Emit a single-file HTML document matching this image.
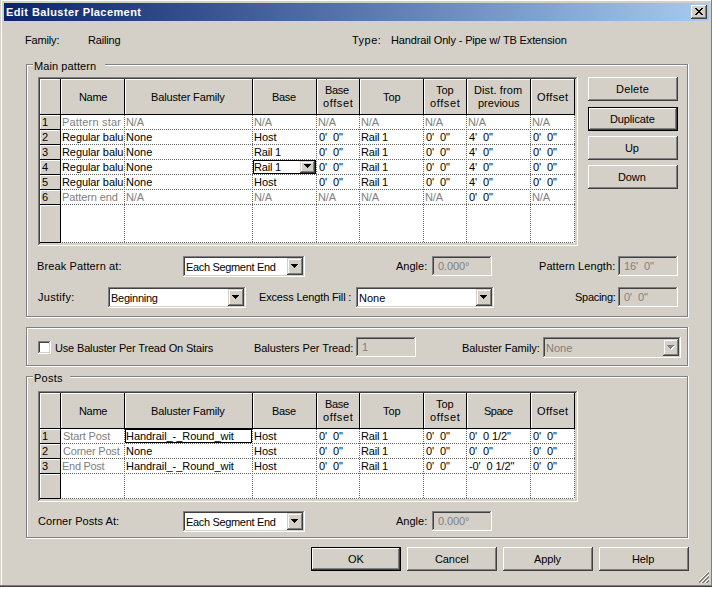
<!DOCTYPE html>
<html><head><meta charset="utf-8"><style>
*{margin:0;padding:0}
html,body{width:712px;height:589px;overflow:hidden;background:#fff}
body{position:relative;font-family:"Liberation Sans",sans-serif;font-size:11px;line-height:13px;letter-spacing:-0.25px;color:#000}
div{position:absolute}
.t{white-space:pre}
</style></head><body>
<div style="left:0px;top:0px;width:712px;height:587px;background:#404040"></div>
<div style="left:0px;top:0px;width:712px;height:586px;background:#808080"></div>
<div style="left:0px;top:0px;width:711px;height:585px;background:#d4d0c8"></div>
<div style="left:1px;top:0px;width:710px;height:585px;background:#ffffff"></div>
<div style="left:2px;top:1px;width:709px;height:584px;background:#d4d0c8"></div>
<div style="left:4px;top:3px;width:705px;height:18px;background:linear-gradient(90deg,#0a246a,#a6caf0)"></div>
<div class="t" style="left:6px;top:6px;color:#fff;letter-spacing:0.409px;font-weight:bold;">Edit Baluster Placement</div>
<div style="left:691px;top:5px;width:16px;height:14px;background:#404040"></div>
<div style="left:691px;top:5px;width:15px;height:13px;background:#ffffff"></div>
<div style="left:692px;top:6px;width:14px;height:12px;background:#808080"></div>
<div style="left:692px;top:6px;width:13px;height:11px;background:#d4d0c8"></div>
<div style="left:695px;top:8px;width:1px;height:1px;background:#000000"></div>
<div style="left:696px;top:8px;width:1px;height:1px;background:#000000"></div>
<div style="left:701px;top:8px;width:1px;height:1px;background:#000000"></div>
<div style="left:702px;top:8px;width:1px;height:1px;background:#000000"></div>
<div style="left:696px;top:9px;width:1px;height:1px;background:#000000"></div>
<div style="left:697px;top:9px;width:1px;height:1px;background:#000000"></div>
<div style="left:700px;top:9px;width:1px;height:1px;background:#000000"></div>
<div style="left:701px;top:9px;width:1px;height:1px;background:#000000"></div>
<div style="left:697px;top:10px;width:1px;height:1px;background:#000000"></div>
<div style="left:698px;top:10px;width:1px;height:1px;background:#000000"></div>
<div style="left:699px;top:10px;width:1px;height:1px;background:#000000"></div>
<div style="left:700px;top:10px;width:1px;height:1px;background:#000000"></div>
<div style="left:698px;top:11px;width:1px;height:1px;background:#000000"></div>
<div style="left:699px;top:11px;width:1px;height:1px;background:#000000"></div>
<div style="left:697px;top:12px;width:1px;height:1px;background:#000000"></div>
<div style="left:698px;top:12px;width:1px;height:1px;background:#000000"></div>
<div style="left:699px;top:12px;width:1px;height:1px;background:#000000"></div>
<div style="left:700px;top:12px;width:1px;height:1px;background:#000000"></div>
<div style="left:696px;top:13px;width:1px;height:1px;background:#000000"></div>
<div style="left:697px;top:13px;width:1px;height:1px;background:#000000"></div>
<div style="left:700px;top:13px;width:1px;height:1px;background:#000000"></div>
<div style="left:701px;top:13px;width:1px;height:1px;background:#000000"></div>
<div style="left:695px;top:14px;width:1px;height:1px;background:#000000"></div>
<div style="left:696px;top:14px;width:1px;height:1px;background:#000000"></div>
<div style="left:701px;top:14px;width:1px;height:1px;background:#000000"></div>
<div style="left:702px;top:14px;width:1px;height:1px;background:#000000"></div>
<div class="t" style="left:25px;top:34px;color:#000;letter-spacing:-0.167px;">Family:</div>
<div class="t" style="left:88px;top:34px;color:#000;letter-spacing:-0.167px;">Railing</div>
<div class="t" style="left:352px;top:34px;color:#000;letter-spacing:0.500px;">Type:</div>
<div class="t" style="left:391px;top:34px;color:#000;letter-spacing:-0.143px;">Handrail Only - Pipe w/ TB Extension</div>
<div style="left:26px;top:64px;width:662px;height:1px;background:#808080"></div>
<div style="left:26px;top:64px;width:1px;height:253px;background:#808080"></div>
<div style="left:688px;top:64px;width:1px;height:254px;background:#ffffff"></div>
<div style="left:26px;top:317px;width:663px;height:1px;background:#ffffff"></div>
<div style="left:27px;top:65px;width:660px;height:1px;background:#ffffff"></div>
<div style="left:27px;top:65px;width:1px;height:251px;background:#ffffff"></div>
<div style="left:687px;top:65px;width:1px;height:252px;background:#808080"></div>
<div style="left:27px;top:316px;width:661px;height:1px;background:#808080"></div>
<div style="left:33px;top:64px;width:72px;height:2px;background:#d4d0c8"></div>
<div class="t" style="left:34px;top:60px;color:#000;letter-spacing:0.091px;">Main pattern</div>
<div style="left:38px;top:77px;width:540px;height:169px;background:#ffffff"></div>
<div style="left:38px;top:77px;width:539px;height:168px;background:#808080"></div>
<div style="left:39px;top:78px;width:538px;height:167px;background:#d4d0c8"></div>
<div style="left:39px;top:78px;width:537px;height:166px;background:#404040"></div>
<div style="left:40px;top:79px;width:536px;height:165px;background:#d4d0c8"></div>
<div style="left:40px;top:79px;width:21px;height:36px;background:#000000"></div>
<div style="left:40px;top:79px;width:20px;height:35px;background:#ffffff"></div>
<div style="left:41px;top:80px;width:19px;height:34px;background:#d4d0c8"></div>
<div style="left:61px;top:79px;width:64px;height:36px;background:#000000"></div>
<div style="left:61px;top:79px;width:63px;height:35px;background:#ffffff"></div>
<div style="left:62px;top:80px;width:62px;height:34px;background:#d4d0c8"></div>
<div style="left:125px;top:79px;width:128px;height:36px;background:#000000"></div>
<div style="left:125px;top:79px;width:127px;height:35px;background:#ffffff"></div>
<div style="left:126px;top:80px;width:126px;height:34px;background:#d4d0c8"></div>
<div style="left:253px;top:79px;width:64px;height:36px;background:#000000"></div>
<div style="left:253px;top:79px;width:63px;height:35px;background:#ffffff"></div>
<div style="left:254px;top:80px;width:62px;height:34px;background:#d4d0c8"></div>
<div style="left:317px;top:79px;width:43px;height:36px;background:#000000"></div>
<div style="left:317px;top:79px;width:42px;height:35px;background:#ffffff"></div>
<div style="left:318px;top:80px;width:41px;height:34px;background:#d4d0c8"></div>
<div style="left:360px;top:79px;width:64px;height:36px;background:#000000"></div>
<div style="left:360px;top:79px;width:63px;height:35px;background:#ffffff"></div>
<div style="left:361px;top:80px;width:62px;height:34px;background:#d4d0c8"></div>
<div style="left:424px;top:79px;width:43px;height:36px;background:#000000"></div>
<div style="left:424px;top:79px;width:42px;height:35px;background:#ffffff"></div>
<div style="left:425px;top:80px;width:41px;height:34px;background:#d4d0c8"></div>
<div style="left:467px;top:79px;width:64px;height:36px;background:#000000"></div>
<div style="left:467px;top:79px;width:63px;height:35px;background:#ffffff"></div>
<div style="left:468px;top:80px;width:62px;height:34px;background:#d4d0c8"></div>
<div style="left:531px;top:79px;width:44px;height:36px;background:#000000"></div>
<div style="left:531px;top:79px;width:43px;height:35px;background:#ffffff"></div>
<div style="left:532px;top:80px;width:42px;height:34px;background:#d4d0c8"></div>
<div class="t" style="left:79px;top:91px;color:#000;letter-spacing:-0.333px;">Name</div>
<div class="t" style="left:151px;top:91px;color:#000;letter-spacing:-0.143px;">Baluster Family</div>
<div class="t" style="left:272px;top:91px;color:#000;letter-spacing:-0.333px;">Base</div>
<div class="t" style="left:325px;top:84px;color:#000;letter-spacing:-0.333px;">Base</div>
<div class="t" style="left:323px;top:97px;color:#000;letter-spacing:0.600px;">offset</div>
<div class="t" style="left:383px;top:91px;color:#000;letter-spacing:0.000px;">Top</div>
<div class="t" style="left:436px;top:84px;color:#000;letter-spacing:0.000px;">Top</div>
<div class="t" style="left:430px;top:97px;color:#000;letter-spacing:0.600px;">offset</div>
<div class="t" style="left:474px;top:84px;color:#000;letter-spacing:0.111px;">Dist. from</div>
<div class="t" style="left:478px;top:97px;color:#000;letter-spacing:0.000px;">previous</div>
<div class="t" style="left:537px;top:91px;color:#000;letter-spacing:0.400px;">Offset</div>
<div style="left:61px;top:115px;width:514px;height:128px;background:#ffffff"></div>
<div style="left:40px;top:115px;width:21px;height:15px;background:#000000"></div>
<div style="left:40px;top:115px;width:20px;height:14px;background:#ffffff"></div>
<div style="left:41px;top:116px;width:19px;height:13px;background:#d4d0c8"></div>
<div class="t" style="left:42px;top:116px;color:#000;letter-spacing:-0.100px;">1</div>
<div style="left:61px;top:129px;width:514px;height:1px;background:repeating-linear-gradient(90deg,transparent 0 1px,#646464 1px 2px)"></div>
<div style="left:40px;top:130px;width:21px;height:15px;background:#000000"></div>
<div style="left:40px;top:130px;width:20px;height:14px;background:#ffffff"></div>
<div style="left:41px;top:131px;width:19px;height:13px;background:#d4d0c8"></div>
<div class="t" style="left:42px;top:131px;color:#000;letter-spacing:-0.100px;">2</div>
<div style="left:61px;top:144px;width:514px;height:1px;background:repeating-linear-gradient(90deg,transparent 0 1px,#646464 1px 2px)"></div>
<div style="left:40px;top:145px;width:21px;height:15px;background:#000000"></div>
<div style="left:40px;top:145px;width:20px;height:14px;background:#ffffff"></div>
<div style="left:41px;top:146px;width:19px;height:13px;background:#d4d0c8"></div>
<div class="t" style="left:42px;top:146px;color:#000;letter-spacing:-0.100px;">3</div>
<div style="left:61px;top:159px;width:514px;height:1px;background:repeating-linear-gradient(90deg,transparent 0 1px,#646464 1px 2px)"></div>
<div style="left:40px;top:160px;width:21px;height:15px;background:#000000"></div>
<div style="left:40px;top:160px;width:20px;height:14px;background:#ffffff"></div>
<div style="left:41px;top:161px;width:19px;height:13px;background:#d4d0c8"></div>
<div class="t" style="left:42px;top:161px;color:#000;letter-spacing:-0.100px;">4</div>
<div style="left:61px;top:174px;width:514px;height:1px;background:repeating-linear-gradient(90deg,transparent 0 1px,#646464 1px 2px)"></div>
<div style="left:40px;top:175px;width:21px;height:15px;background:#000000"></div>
<div style="left:40px;top:175px;width:20px;height:14px;background:#ffffff"></div>
<div style="left:41px;top:176px;width:19px;height:13px;background:#d4d0c8"></div>
<div class="t" style="left:42px;top:176px;color:#000;letter-spacing:-0.100px;">5</div>
<div style="left:61px;top:189px;width:514px;height:1px;background:repeating-linear-gradient(90deg,transparent 0 1px,#646464 1px 2px)"></div>
<div style="left:40px;top:190px;width:21px;height:15px;background:#000000"></div>
<div style="left:40px;top:190px;width:20px;height:14px;background:#ffffff"></div>
<div style="left:41px;top:191px;width:19px;height:13px;background:#d4d0c8"></div>
<div class="t" style="left:42px;top:191px;color:#000;letter-spacing:-0.100px;">6</div>
<div style="left:61px;top:204px;width:514px;height:1px;background:repeating-linear-gradient(90deg,transparent 0 1px,#646464 1px 2px)"></div>
<div style="left:40px;top:205px;width:21px;height:38px;background:#000000"></div>
<div style="left:40px;top:205px;width:20px;height:37px;background:#ffffff"></div>
<div style="left:41px;top:206px;width:19px;height:36px;background:#d4d0c8"></div>
<div style="left:61px;top:242px;width:513px;height:1px;background:repeating-linear-gradient(90deg,transparent 0 1px,#646464 1px 2px)"></div>
<div style="left:124px;top:115px;width:1px;height:128px;background:repeating-linear-gradient(180deg,#646464 0 1px,transparent 1px 2px)"></div>
<div style="left:252px;top:115px;width:1px;height:128px;background:repeating-linear-gradient(180deg,#646464 0 1px,transparent 1px 2px)"></div>
<div style="left:316px;top:115px;width:1px;height:128px;background:repeating-linear-gradient(180deg,#646464 0 1px,transparent 1px 2px)"></div>
<div style="left:359px;top:115px;width:1px;height:128px;background:repeating-linear-gradient(180deg,#646464 0 1px,transparent 1px 2px)"></div>
<div style="left:423px;top:115px;width:1px;height:128px;background:repeating-linear-gradient(180deg,#646464 0 1px,transparent 1px 2px)"></div>
<div style="left:466px;top:115px;width:1px;height:128px;background:repeating-linear-gradient(180deg,#646464 0 1px,transparent 1px 2px)"></div>
<div style="left:530px;top:115px;width:1px;height:128px;background:repeating-linear-gradient(180deg,#646464 0 1px,transparent 1px 2px)"></div>
<div style="left:574px;top:115px;width:1px;height:128px;background:repeating-linear-gradient(180deg,#646464 0 1px,transparent 1px 2px)"></div>
<div class="t" style="left:62px;top:116px;color:#808080;letter-spacing:0.182px;">Pattern star</div>
<div class="t" style="left:126px;top:116px;color:#808080;letter-spacing:-0.100px;">N/A</div>
<div class="t" style="left:254px;top:116px;color:#808080;letter-spacing:-0.100px;">N/A</div>
<div class="t" style="left:318px;top:116px;color:#808080;letter-spacing:-0.100px;">N/A</div>
<div class="t" style="left:361px;top:116px;color:#808080;letter-spacing:-0.100px;">N/A</div>
<div class="t" style="left:425px;top:116px;color:#808080;letter-spacing:-0.100px;">N/A</div>
<div class="t" style="left:468px;top:116px;color:#808080;letter-spacing:-0.100px;">N/A</div>
<div class="t" style="left:532px;top:116px;color:#808080;letter-spacing:-0.100px;">N/A</div>
<div class="t" style="left:62px;top:131px;color:#000;letter-spacing:-0.091px;">Regular balu</div>
<div class="t" style="left:126px;top:131px;color:#000;letter-spacing:0.000px;">None</div>
<div class="t" style="left:254px;top:131px;color:#000;letter-spacing:0.000px;">Host</div>
<div class="t" style="left:319px;top:131px;color:#000;letter-spacing:-0.100px;">0'  0"</div>
<div class="t" style="left:361px;top:131px;color:#000;letter-spacing:-0.200px;">Rail 1</div>
<div class="t" style="left:426px;top:131px;color:#000;letter-spacing:-0.100px;">0'  0"</div>
<div class="t" style="left:469px;top:131px;color:#000;letter-spacing:-0.100px;">4'  0"</div>
<div class="t" style="left:533px;top:131px;color:#000;letter-spacing:-0.100px;">0'  0"</div>
<div class="t" style="left:62px;top:146px;color:#000;letter-spacing:-0.091px;">Regular balu</div>
<div class="t" style="left:126px;top:146px;color:#000;letter-spacing:0.000px;">None</div>
<div class="t" style="left:254px;top:146px;color:#000;letter-spacing:-0.200px;">Rail 1</div>
<div class="t" style="left:319px;top:146px;color:#000;letter-spacing:-0.100px;">0'  0"</div>
<div class="t" style="left:361px;top:146px;color:#000;letter-spacing:-0.200px;">Rail 1</div>
<div class="t" style="left:426px;top:146px;color:#000;letter-spacing:-0.100px;">0'  0"</div>
<div class="t" style="left:469px;top:146px;color:#000;letter-spacing:-0.100px;">4'  0"</div>
<div class="t" style="left:533px;top:146px;color:#000;letter-spacing:-0.100px;">0'  0"</div>
<div class="t" style="left:62px;top:161px;color:#000;letter-spacing:-0.091px;">Regular balu</div>
<div class="t" style="left:126px;top:161px;color:#000;letter-spacing:0.000px;">None</div>
<div class="t" style="left:319px;top:161px;color:#000;letter-spacing:-0.100px;">0'  0"</div>
<div class="t" style="left:361px;top:161px;color:#000;letter-spacing:-0.200px;">Rail 1</div>
<div class="t" style="left:426px;top:161px;color:#000;letter-spacing:-0.100px;">0'  0"</div>
<div class="t" style="left:469px;top:161px;color:#000;letter-spacing:-0.100px;">4'  0"</div>
<div class="t" style="left:533px;top:161px;color:#000;letter-spacing:-0.100px;">0'  0"</div>
<div class="t" style="left:62px;top:176px;color:#000;letter-spacing:-0.091px;">Regular balu</div>
<div class="t" style="left:126px;top:176px;color:#000;letter-spacing:0.000px;">None</div>
<div class="t" style="left:254px;top:176px;color:#000;letter-spacing:0.000px;">Host</div>
<div class="t" style="left:319px;top:176px;color:#000;letter-spacing:-0.100px;">0'  0"</div>
<div class="t" style="left:361px;top:176px;color:#000;letter-spacing:-0.200px;">Rail 1</div>
<div class="t" style="left:426px;top:176px;color:#000;letter-spacing:-0.100px;">0'  0"</div>
<div class="t" style="left:469px;top:176px;color:#000;letter-spacing:-0.100px;">4'  0"</div>
<div class="t" style="left:533px;top:176px;color:#000;letter-spacing:-0.100px;">0'  0"</div>
<div class="t" style="left:62px;top:191px;color:#808080;letter-spacing:-0.100px;">Pattern end</div>
<div class="t" style="left:126px;top:191px;color:#808080;letter-spacing:-0.100px;">N/A</div>
<div class="t" style="left:254px;top:191px;color:#808080;letter-spacing:-0.100px;">N/A</div>
<div class="t" style="left:318px;top:191px;color:#808080;letter-spacing:-0.100px;">N/A</div>
<div class="t" style="left:361px;top:191px;color:#808080;letter-spacing:-0.100px;">N/A</div>
<div class="t" style="left:425px;top:191px;color:#808080;letter-spacing:-0.100px;">N/A</div>
<div class="t" style="left:469px;top:191px;color:#000;letter-spacing:-0.100px;">0'  0"</div>
<div class="t" style="left:532px;top:191px;color:#808080;letter-spacing:-0.100px;">N/A</div>
<div style="left:253px;top:160px;width:63px;height:14px;background:#000000"></div>
<div style="left:254px;top:161px;width:61px;height:12px;background:#ffffff"></div>
<div style="left:300px;top:161px;width:15px;height:12px;background:#404040"></div>
<div style="left:300px;top:161px;width:14px;height:11px;background:#d4d0c8"></div>
<div style="left:301px;top:162px;width:13px;height:10px;background:#808080"></div>
<div style="left:301px;top:162px;width:12px;height:9px;background:#ffffff"></div>
<div style="left:302px;top:163px;width:11px;height:8px;background:#d4d0c8"></div>
<div style="left:304px;top:164px;width:7px;height:1px;background:#000000"></div>
<div style="left:305px;top:165px;width:5px;height:1px;background:#000000"></div>
<div style="left:306px;top:166px;width:3px;height:1px;background:#000000"></div>
<div style="left:307px;top:167px;width:1px;height:1px;background:#000000"></div>
<div class="t" style="left:254px;top:161px;color:#000;letter-spacing:-0.200px;">Rail 1</div>
<div style="left:588px;top:77px;width:90px;height:24px;background:#404040"></div>
<div style="left:588px;top:77px;width:89px;height:23px;background:#ffffff"></div>
<div style="left:589px;top:78px;width:88px;height:22px;background:#808080"></div>
<div style="left:589px;top:78px;width:87px;height:21px;background:#d4d0c8"></div>
<div style="left:590px;top:79px;width:86px;height:20px;background:#d4d0c8"></div>
<div class="t" style="left:616px;top:83px;color:#000;letter-spacing:0.200px;">Delete</div>
<div style="left:588px;top:107px;width:90px;height:24px;background:#000000"></div>
<div style="left:589px;top:108px;width:88px;height:22px;background:#404040"></div>
<div style="left:589px;top:108px;width:87px;height:21px;background:#ffffff"></div>
<div style="left:590px;top:109px;width:86px;height:20px;background:#808080"></div>
<div style="left:590px;top:109px;width:85px;height:19px;background:#d4d0c8"></div>
<div style="left:591px;top:110px;width:84px;height:18px;background:#d4d0c8"></div>
<div class="t" style="left:610px;top:113px;color:#000;letter-spacing:-0.125px;">Duplicate</div>
<div style="left:588px;top:136px;width:90px;height:24px;background:#404040"></div>
<div style="left:588px;top:136px;width:89px;height:23px;background:#ffffff"></div>
<div style="left:589px;top:137px;width:88px;height:22px;background:#808080"></div>
<div style="left:589px;top:137px;width:87px;height:21px;background:#d4d0c8"></div>
<div style="left:590px;top:138px;width:86px;height:20px;background:#d4d0c8"></div>
<div class="t" style="left:625px;top:142px;color:#000;letter-spacing:-0.100px;">Up</div>
<div style="left:588px;top:165px;width:90px;height:24px;background:#404040"></div>
<div style="left:588px;top:165px;width:89px;height:23px;background:#ffffff"></div>
<div style="left:589px;top:166px;width:88px;height:22px;background:#808080"></div>
<div style="left:589px;top:166px;width:87px;height:21px;background:#d4d0c8"></div>
<div style="left:590px;top:167px;width:86px;height:20px;background:#d4d0c8"></div>
<div class="t" style="left:618px;top:171px;color:#000;letter-spacing:-0.100px;">Down</div>
<div class="t" style="left:37px;top:260px;color:#000;letter-spacing:0.125px;">Break Pattern at:</div>
<div style="left:183px;top:256px;width:122px;height:21px;background:#ffffff"></div>
<div style="left:183px;top:256px;width:121px;height:20px;background:#808080"></div>
<div style="left:184px;top:257px;width:120px;height:19px;background:#d4d0c8"></div>
<div style="left:184px;top:257px;width:119px;height:18px;background:#404040"></div>
<div style="left:185px;top:258px;width:118px;height:17px;background:#ffffff"></div>
<div style="left:287px;top:258px;width:16px;height:17px;background:#404040"></div>
<div style="left:287px;top:258px;width:15px;height:16px;background:#d4d0c8"></div>
<div style="left:288px;top:259px;width:14px;height:15px;background:#808080"></div>
<div style="left:288px;top:259px;width:13px;height:14px;background:#ffffff"></div>
<div style="left:289px;top:260px;width:12px;height:13px;background:#d4d0c8"></div>
<div style="left:291px;top:264px;width:7px;height:1px;background:#000000"></div>
<div style="left:292px;top:265px;width:5px;height:1px;background:#000000"></div>
<div style="left:293px;top:266px;width:3px;height:1px;background:#000000"></div>
<div style="left:294px;top:267px;width:1px;height:1px;background:#000000"></div>
<div class="t" style="left:186px;top:261px;color:#000;letter-spacing:-0.333px;">Each Segment End</div>
<div class="t" style="left:396px;top:260px;color:#000;letter-spacing:0.000px;">Angle:</div>
<div style="left:432px;top:256px;width:60px;height:20px;background:#ffffff"></div>
<div style="left:432px;top:256px;width:59px;height:19px;background:#808080"></div>
<div style="left:433px;top:257px;width:58px;height:18px;background:#d4d0c8"></div>
<div style="left:433px;top:257px;width:57px;height:17px;background:#404040"></div>
<div style="left:434px;top:258px;width:56px;height:16px;background:#d4d0c8"></div>
<div class="t" style="left:438px;top:260px;color:#808080;letter-spacing:-0.100px;">0.000°</div>
<div class="t" style="left:539px;top:260px;color:#000;letter-spacing:0.071px;">Pattern Length:</div>
<div style="left:618px;top:256px;width:60px;height:20px;background:#ffffff"></div>
<div style="left:618px;top:256px;width:59px;height:19px;background:#808080"></div>
<div style="left:619px;top:257px;width:58px;height:18px;background:#d4d0c8"></div>
<div style="left:619px;top:257px;width:57px;height:17px;background:#404040"></div>
<div style="left:620px;top:258px;width:56px;height:16px;background:#d4d0c8"></div>
<div class="t" style="left:624px;top:260px;color:#808080;letter-spacing:-0.100px;">16'  0"</div>
<div class="t" style="left:38px;top:291px;color:#000;letter-spacing:0.286px;">Justify:</div>
<div style="left:108px;top:287px;width:138px;height:21px;background:#ffffff"></div>
<div style="left:108px;top:287px;width:137px;height:20px;background:#808080"></div>
<div style="left:109px;top:288px;width:136px;height:19px;background:#d4d0c8"></div>
<div style="left:109px;top:288px;width:135px;height:18px;background:#404040"></div>
<div style="left:110px;top:289px;width:134px;height:17px;background:#ffffff"></div>
<div style="left:228px;top:289px;width:16px;height:17px;background:#404040"></div>
<div style="left:228px;top:289px;width:15px;height:16px;background:#d4d0c8"></div>
<div style="left:229px;top:290px;width:14px;height:15px;background:#808080"></div>
<div style="left:229px;top:290px;width:13px;height:14px;background:#ffffff"></div>
<div style="left:230px;top:291px;width:12px;height:13px;background:#d4d0c8"></div>
<div style="left:232px;top:295px;width:7px;height:1px;background:#000000"></div>
<div style="left:233px;top:296px;width:5px;height:1px;background:#000000"></div>
<div style="left:234px;top:297px;width:3px;height:1px;background:#000000"></div>
<div style="left:235px;top:298px;width:1px;height:1px;background:#000000"></div>
<div class="t" style="left:111px;top:292px;color:#000;letter-spacing:-0.250px;">Beginning</div>
<div class="t" style="left:259px;top:291px;color:#000;letter-spacing:-0.158px;">Excess Length Fill :</div>
<div style="left:356px;top:287px;width:138px;height:21px;background:#ffffff"></div>
<div style="left:356px;top:287px;width:137px;height:20px;background:#808080"></div>
<div style="left:357px;top:288px;width:136px;height:19px;background:#d4d0c8"></div>
<div style="left:357px;top:288px;width:135px;height:18px;background:#404040"></div>
<div style="left:358px;top:289px;width:134px;height:17px;background:#ffffff"></div>
<div style="left:476px;top:289px;width:16px;height:17px;background:#404040"></div>
<div style="left:476px;top:289px;width:15px;height:16px;background:#d4d0c8"></div>
<div style="left:477px;top:290px;width:14px;height:15px;background:#808080"></div>
<div style="left:477px;top:290px;width:13px;height:14px;background:#ffffff"></div>
<div style="left:478px;top:291px;width:12px;height:13px;background:#d4d0c8"></div>
<div style="left:480px;top:295px;width:7px;height:1px;background:#000000"></div>
<div style="left:481px;top:296px;width:5px;height:1px;background:#000000"></div>
<div style="left:482px;top:297px;width:3px;height:1px;background:#000000"></div>
<div style="left:483px;top:298px;width:1px;height:1px;background:#000000"></div>
<div class="t" style="left:359px;top:292px;color:#000;letter-spacing:0.000px;">None</div>
<div class="t" style="left:575px;top:291px;color:#000;letter-spacing:-0.286px;">Spacing:</div>
<div style="left:618px;top:287px;width:60px;height:20px;background:#ffffff"></div>
<div style="left:618px;top:287px;width:59px;height:19px;background:#808080"></div>
<div style="left:619px;top:288px;width:58px;height:18px;background:#d4d0c8"></div>
<div style="left:619px;top:288px;width:57px;height:17px;background:#404040"></div>
<div style="left:620px;top:289px;width:56px;height:16px;background:#d4d0c8"></div>
<div class="t" style="left:624px;top:291px;color:#808080;letter-spacing:-0.100px;">0'  0"</div>
<div style="left:26px;top:327px;width:662px;height:1px;background:#808080"></div>
<div style="left:26px;top:327px;width:1px;height:39px;background:#808080"></div>
<div style="left:688px;top:327px;width:1px;height:40px;background:#ffffff"></div>
<div style="left:26px;top:366px;width:663px;height:1px;background:#ffffff"></div>
<div style="left:27px;top:328px;width:660px;height:1px;background:#ffffff"></div>
<div style="left:27px;top:328px;width:1px;height:37px;background:#ffffff"></div>
<div style="left:687px;top:328px;width:1px;height:38px;background:#808080"></div>
<div style="left:27px;top:365px;width:661px;height:1px;background:#808080"></div>
<div style="left:38px;top:341px;width:13px;height:13px;background:#ffffff"></div>
<div style="left:38px;top:341px;width:12px;height:12px;background:#808080"></div>
<div style="left:39px;top:342px;width:11px;height:11px;background:#d4d0c8"></div>
<div style="left:39px;top:342px;width:10px;height:10px;background:#404040"></div>
<div style="left:40px;top:343px;width:9px;height:9px;background:#ffffff"></div>
<div class="t" style="left:55px;top:342px;color:#000;letter-spacing:-0.161px;">Use Baluster Per Tread On Stairs</div>
<div class="t" style="left:254px;top:342px;color:#000;letter-spacing:-0.053px;">Balusters Per Tread:</div>
<div style="left:356px;top:337px;width:60px;height:20px;background:#ffffff"></div>
<div style="left:356px;top:337px;width:59px;height:19px;background:#808080"></div>
<div style="left:357px;top:338px;width:58px;height:18px;background:#d4d0c8"></div>
<div style="left:357px;top:338px;width:57px;height:17px;background:#404040"></div>
<div style="left:358px;top:339px;width:56px;height:16px;background:#d4d0c8"></div>
<div class="t" style="left:362px;top:341px;color:#808080;letter-spacing:-0.100px;">1</div>
<div class="t" style="left:462px;top:342px;color:#000;letter-spacing:-0.067px;">Baluster Family:</div>
<div style="left:543px;top:337px;width:138px;height:21px;background:#ffffff"></div>
<div style="left:543px;top:337px;width:137px;height:20px;background:#808080"></div>
<div style="left:544px;top:338px;width:136px;height:19px;background:#d4d0c8"></div>
<div style="left:544px;top:338px;width:135px;height:18px;background:#404040"></div>
<div style="left:545px;top:339px;width:134px;height:17px;background:#d4d0c8"></div>
<div style="left:663px;top:339px;width:16px;height:17px;background:#404040"></div>
<div style="left:663px;top:339px;width:15px;height:16px;background:#d4d0c8"></div>
<div style="left:664px;top:340px;width:14px;height:15px;background:#808080"></div>
<div style="left:664px;top:340px;width:13px;height:14px;background:#ffffff"></div>
<div style="left:665px;top:341px;width:12px;height:13px;background:#d4d0c8"></div>
<div style="left:668px;top:346px;width:7px;height:1px;background:#ffffff"></div>
<div style="left:669px;top:347px;width:5px;height:1px;background:#ffffff"></div>
<div style="left:670px;top:348px;width:3px;height:1px;background:#ffffff"></div>
<div style="left:671px;top:349px;width:1px;height:1px;background:#ffffff"></div>
<div style="left:667px;top:345px;width:7px;height:1px;background:#808080"></div>
<div style="left:668px;top:346px;width:5px;height:1px;background:#808080"></div>
<div style="left:669px;top:347px;width:3px;height:1px;background:#808080"></div>
<div style="left:670px;top:348px;width:1px;height:1px;background:#808080"></div>
<div class="t" style="left:546px;top:342px;color:#808080;letter-spacing:0.000px;">None</div>
<div style="left:26px;top:376px;width:662px;height:1px;background:#808080"></div>
<div style="left:26px;top:376px;width:1px;height:162px;background:#808080"></div>
<div style="left:688px;top:376px;width:1px;height:163px;background:#ffffff"></div>
<div style="left:26px;top:538px;width:663px;height:1px;background:#ffffff"></div>
<div style="left:27px;top:377px;width:660px;height:1px;background:#ffffff"></div>
<div style="left:27px;top:377px;width:1px;height:160px;background:#ffffff"></div>
<div style="left:687px;top:377px;width:1px;height:161px;background:#808080"></div>
<div style="left:27px;top:537px;width:661px;height:1px;background:#808080"></div>
<div style="left:33px;top:376px;width:37px;height:2px;background:#d4d0c8"></div>
<div class="t" style="left:34px;top:372px;color:#000;letter-spacing:0.250px;">Posts</div>
<div style="left:38px;top:391px;width:540px;height:111px;background:#ffffff"></div>
<div style="left:38px;top:391px;width:539px;height:110px;background:#808080"></div>
<div style="left:39px;top:392px;width:538px;height:109px;background:#d4d0c8"></div>
<div style="left:39px;top:392px;width:537px;height:108px;background:#404040"></div>
<div style="left:40px;top:393px;width:536px;height:107px;background:#d4d0c8"></div>
<div style="left:40px;top:393px;width:21px;height:36px;background:#000000"></div>
<div style="left:40px;top:393px;width:20px;height:35px;background:#ffffff"></div>
<div style="left:41px;top:394px;width:19px;height:34px;background:#d4d0c8"></div>
<div style="left:61px;top:393px;width:64px;height:36px;background:#000000"></div>
<div style="left:61px;top:393px;width:63px;height:35px;background:#ffffff"></div>
<div style="left:62px;top:394px;width:62px;height:34px;background:#d4d0c8"></div>
<div style="left:125px;top:393px;width:128px;height:36px;background:#000000"></div>
<div style="left:125px;top:393px;width:127px;height:35px;background:#ffffff"></div>
<div style="left:126px;top:394px;width:126px;height:34px;background:#d4d0c8"></div>
<div style="left:253px;top:393px;width:64px;height:36px;background:#000000"></div>
<div style="left:253px;top:393px;width:63px;height:35px;background:#ffffff"></div>
<div style="left:254px;top:394px;width:62px;height:34px;background:#d4d0c8"></div>
<div style="left:317px;top:393px;width:43px;height:36px;background:#000000"></div>
<div style="left:317px;top:393px;width:42px;height:35px;background:#ffffff"></div>
<div style="left:318px;top:394px;width:41px;height:34px;background:#d4d0c8"></div>
<div style="left:360px;top:393px;width:64px;height:36px;background:#000000"></div>
<div style="left:360px;top:393px;width:63px;height:35px;background:#ffffff"></div>
<div style="left:361px;top:394px;width:62px;height:34px;background:#d4d0c8"></div>
<div style="left:424px;top:393px;width:43px;height:36px;background:#000000"></div>
<div style="left:424px;top:393px;width:42px;height:35px;background:#ffffff"></div>
<div style="left:425px;top:394px;width:41px;height:34px;background:#d4d0c8"></div>
<div style="left:467px;top:393px;width:64px;height:36px;background:#000000"></div>
<div style="left:467px;top:393px;width:63px;height:35px;background:#ffffff"></div>
<div style="left:468px;top:394px;width:62px;height:34px;background:#d4d0c8"></div>
<div style="left:531px;top:393px;width:44px;height:36px;background:#000000"></div>
<div style="left:531px;top:393px;width:43px;height:35px;background:#ffffff"></div>
<div style="left:532px;top:394px;width:42px;height:34px;background:#d4d0c8"></div>
<div class="t" style="left:79px;top:405px;color:#000;letter-spacing:-0.333px;">Name</div>
<div class="t" style="left:151px;top:405px;color:#000;letter-spacing:-0.143px;">Baluster Family</div>
<div class="t" style="left:272px;top:405px;color:#000;letter-spacing:-0.333px;">Base</div>
<div class="t" style="left:325px;top:398px;color:#000;letter-spacing:-0.333px;">Base</div>
<div class="t" style="left:323px;top:411px;color:#000;letter-spacing:0.600px;">offset</div>
<div class="t" style="left:383px;top:405px;color:#000;letter-spacing:0.000px;">Top</div>
<div class="t" style="left:436px;top:398px;color:#000;letter-spacing:0.000px;">Top</div>
<div class="t" style="left:430px;top:411px;color:#000;letter-spacing:0.600px;">offset</div>
<div class="t" style="left:484px;top:405px;color:#000;letter-spacing:-0.500px;">Space</div>
<div class="t" style="left:537px;top:405px;color:#000;letter-spacing:0.400px;">Offset</div>
<div style="left:61px;top:429px;width:514px;height:70px;background:#ffffff"></div>
<div style="left:40px;top:429px;width:21px;height:15px;background:#000000"></div>
<div style="left:40px;top:429px;width:20px;height:14px;background:#ffffff"></div>
<div style="left:41px;top:430px;width:19px;height:13px;background:#d4d0c8"></div>
<div class="t" style="left:42px;top:430px;color:#000;letter-spacing:-0.100px;">1</div>
<div style="left:61px;top:443px;width:514px;height:1px;background:repeating-linear-gradient(90deg,transparent 0 1px,#646464 1px 2px)"></div>
<div style="left:40px;top:444px;width:21px;height:15px;background:#000000"></div>
<div style="left:40px;top:444px;width:20px;height:14px;background:#ffffff"></div>
<div style="left:41px;top:445px;width:19px;height:13px;background:#d4d0c8"></div>
<div class="t" style="left:42px;top:445px;color:#000;letter-spacing:-0.100px;">2</div>
<div style="left:61px;top:458px;width:514px;height:1px;background:repeating-linear-gradient(90deg,transparent 0 1px,#646464 1px 2px)"></div>
<div style="left:40px;top:459px;width:21px;height:15px;background:#000000"></div>
<div style="left:40px;top:459px;width:20px;height:14px;background:#ffffff"></div>
<div style="left:41px;top:460px;width:19px;height:13px;background:#d4d0c8"></div>
<div class="t" style="left:42px;top:460px;color:#000;letter-spacing:-0.100px;">3</div>
<div style="left:61px;top:473px;width:514px;height:1px;background:repeating-linear-gradient(90deg,transparent 0 1px,#646464 1px 2px)"></div>
<div style="left:40px;top:474px;width:21px;height:25px;background:#000000"></div>
<div style="left:40px;top:474px;width:20px;height:24px;background:#ffffff"></div>
<div style="left:41px;top:475px;width:19px;height:23px;background:#d4d0c8"></div>
<div style="left:61px;top:498px;width:513px;height:1px;background:repeating-linear-gradient(90deg,transparent 0 1px,#646464 1px 2px)"></div>
<div style="left:124px;top:429px;width:1px;height:70px;background:repeating-linear-gradient(180deg,#646464 0 1px,transparent 1px 2px)"></div>
<div style="left:252px;top:429px;width:1px;height:70px;background:repeating-linear-gradient(180deg,#646464 0 1px,transparent 1px 2px)"></div>
<div style="left:316px;top:429px;width:1px;height:70px;background:repeating-linear-gradient(180deg,#646464 0 1px,transparent 1px 2px)"></div>
<div style="left:359px;top:429px;width:1px;height:70px;background:repeating-linear-gradient(180deg,#646464 0 1px,transparent 1px 2px)"></div>
<div style="left:423px;top:429px;width:1px;height:70px;background:repeating-linear-gradient(180deg,#646464 0 1px,transparent 1px 2px)"></div>
<div style="left:466px;top:429px;width:1px;height:70px;background:repeating-linear-gradient(180deg,#646464 0 1px,transparent 1px 2px)"></div>
<div style="left:530px;top:429px;width:1px;height:70px;background:repeating-linear-gradient(180deg,#646464 0 1px,transparent 1px 2px)"></div>
<div style="left:574px;top:429px;width:1px;height:70px;background:repeating-linear-gradient(180deg,#646464 0 1px,transparent 1px 2px)"></div>
<div class="t" style="left:63px;top:430px;color:#808080;letter-spacing:-0.111px;">Start Post</div>
<div class="t" style="left:254px;top:430px;color:#000;letter-spacing:0.000px;">Host</div>
<div class="t" style="left:319px;top:430px;color:#000;letter-spacing:-0.100px;">0'  0"</div>
<div class="t" style="left:361px;top:430px;color:#000;letter-spacing:-0.200px;">Rail 1</div>
<div class="t" style="left:426px;top:430px;color:#000;letter-spacing:-0.100px;">0'  0"</div>
<div class="t" style="left:469px;top:430px;color:#000;letter-spacing:-0.100px;">0'  0 1/2"</div>
<div class="t" style="left:533px;top:430px;color:#000;letter-spacing:-0.100px;">0'  0"</div>
<div class="t" style="left:63px;top:445px;color:#808080;letter-spacing:-0.200px;">Corner Post</div>
<div class="t" style="left:126px;top:445px;color:#000;letter-spacing:0.000px;">None</div>
<div class="t" style="left:254px;top:445px;color:#000;letter-spacing:0.000px;">Host</div>
<div class="t" style="left:319px;top:445px;color:#000;letter-spacing:-0.100px;">0'  0"</div>
<div class="t" style="left:361px;top:445px;color:#000;letter-spacing:-0.200px;">Rail 1</div>
<div class="t" style="left:426px;top:445px;color:#000;letter-spacing:-0.100px;">0'  0"</div>
<div class="t" style="left:469px;top:445px;color:#000;letter-spacing:-0.100px;">0'  0"</div>
<div class="t" style="left:533px;top:445px;color:#000;letter-spacing:-0.100px;">0'  0"</div>
<div class="t" style="left:62px;top:460px;color:#808080;letter-spacing:-0.286px;">End Post</div>
<div class="t" style="left:126px;top:460px;color:#000;letter-spacing:-0.053px;">Handrail_-_Round_wit</div>
<div class="t" style="left:254px;top:460px;color:#000;letter-spacing:0.000px;">Host</div>
<div class="t" style="left:319px;top:460px;color:#000;letter-spacing:-0.100px;">0'  0"</div>
<div class="t" style="left:361px;top:460px;color:#000;letter-spacing:-0.200px;">Rail 1</div>
<div class="t" style="left:426px;top:460px;color:#000;letter-spacing:-0.100px;">0'  0"</div>
<div class="t" style="left:469px;top:460px;color:#000;letter-spacing:-0.100px;">-0'  0 1/2"</div>
<div class="t" style="left:533px;top:460px;color:#000;letter-spacing:-0.100px;">0'  0"</div>
<div style="left:125px;top:429px;width:127px;height:14px;background:#000000"></div>
<div style="left:126px;top:430px;width:125px;height:12px;background:#ffffff"></div>
<div class="t" style="left:126px;top:430px;color:#000;letter-spacing:-0.053px;">Handrail_-_Round_wit</div>
<div class="t" style="left:38px;top:515px;color:#000;letter-spacing:0.067px;">Corner Posts At:</div>
<div style="left:183px;top:511px;width:122px;height:21px;background:#ffffff"></div>
<div style="left:183px;top:511px;width:121px;height:20px;background:#808080"></div>
<div style="left:184px;top:512px;width:120px;height:19px;background:#d4d0c8"></div>
<div style="left:184px;top:512px;width:119px;height:18px;background:#404040"></div>
<div style="left:185px;top:513px;width:118px;height:17px;background:#ffffff"></div>
<div style="left:287px;top:513px;width:16px;height:17px;background:#404040"></div>
<div style="left:287px;top:513px;width:15px;height:16px;background:#d4d0c8"></div>
<div style="left:288px;top:514px;width:14px;height:15px;background:#808080"></div>
<div style="left:288px;top:514px;width:13px;height:14px;background:#ffffff"></div>
<div style="left:289px;top:515px;width:12px;height:13px;background:#d4d0c8"></div>
<div style="left:291px;top:519px;width:7px;height:1px;background:#000000"></div>
<div style="left:292px;top:520px;width:5px;height:1px;background:#000000"></div>
<div style="left:293px;top:521px;width:3px;height:1px;background:#000000"></div>
<div style="left:294px;top:522px;width:1px;height:1px;background:#000000"></div>
<div class="t" style="left:186px;top:516px;color:#000;letter-spacing:-0.333px;">Each Segment End</div>
<div class="t" style="left:396px;top:515px;color:#000;letter-spacing:0.000px;">Angle:</div>
<div style="left:432px;top:511px;width:60px;height:20px;background:#ffffff"></div>
<div style="left:432px;top:511px;width:59px;height:19px;background:#808080"></div>
<div style="left:433px;top:512px;width:58px;height:18px;background:#d4d0c8"></div>
<div style="left:433px;top:512px;width:57px;height:17px;background:#404040"></div>
<div style="left:434px;top:513px;width:56px;height:16px;background:#d4d0c8"></div>
<div class="t" style="left:438px;top:515px;color:#808080;letter-spacing:-0.100px;">0.000°</div>
<div style="left:311px;top:547px;width:90px;height:24px;background:#000000"></div>
<div style="left:312px;top:548px;width:88px;height:22px;background:#404040"></div>
<div style="left:312px;top:548px;width:87px;height:21px;background:#ffffff"></div>
<div style="left:313px;top:549px;width:86px;height:20px;background:#808080"></div>
<div style="left:313px;top:549px;width:85px;height:19px;background:#d4d0c8"></div>
<div style="left:314px;top:550px;width:84px;height:18px;background:#d4d0c8"></div>
<div class="t" style="left:348px;top:553px;color:#000;letter-spacing:-0.100px;">OK</div>
<div style="left:407px;top:547px;width:90px;height:24px;background:#404040"></div>
<div style="left:407px;top:547px;width:89px;height:23px;background:#ffffff"></div>
<div style="left:408px;top:548px;width:88px;height:22px;background:#808080"></div>
<div style="left:408px;top:548px;width:87px;height:21px;background:#d4d0c8"></div>
<div style="left:409px;top:549px;width:86px;height:20px;background:#d4d0c8"></div>
<div class="t" style="left:435px;top:553px;color:#000;letter-spacing:-0.100px;">Cancel</div>
<div style="left:503px;top:547px;width:90px;height:24px;background:#404040"></div>
<div style="left:503px;top:547px;width:89px;height:23px;background:#ffffff"></div>
<div style="left:504px;top:548px;width:88px;height:22px;background:#808080"></div>
<div style="left:504px;top:548px;width:87px;height:21px;background:#d4d0c8"></div>
<div style="left:505px;top:549px;width:86px;height:20px;background:#d4d0c8"></div>
<div class="t" style="left:534px;top:553px;color:#000;letter-spacing:-0.100px;">Apply</div>
<div style="left:599px;top:547px;width:90px;height:24px;background:#404040"></div>
<div style="left:599px;top:547px;width:89px;height:23px;background:#ffffff"></div>
<div style="left:600px;top:548px;width:88px;height:22px;background:#808080"></div>
<div style="left:600px;top:548px;width:87px;height:21px;background:#d4d0c8"></div>
<div style="left:601px;top:549px;width:86px;height:20px;background:#d4d0c8"></div>
<div class="t" style="left:632px;top:553px;color:#000;letter-spacing:-0.100px;">Help</div>
<div style="left:699px;top:580px;width:1px;height:1px;background:#ffffff"></div>
<div style="left:700px;top:579px;width:1px;height:1px;background:#ffffff"></div>
<div style="left:701px;top:578px;width:1px;height:1px;background:#ffffff"></div>
<div style="left:702px;top:577px;width:1px;height:1px;background:#ffffff"></div>
<div style="left:703px;top:576px;width:1px;height:1px;background:#ffffff"></div>
<div style="left:704px;top:575px;width:1px;height:1px;background:#ffffff"></div>
<div style="left:705px;top:574px;width:1px;height:1px;background:#ffffff"></div>
<div style="left:706px;top:573px;width:1px;height:1px;background:#ffffff"></div>
<div style="left:707px;top:572px;width:1px;height:1px;background:#ffffff"></div>
<div style="left:708px;top:571px;width:1px;height:1px;background:#ffffff"></div>
<div style="left:699px;top:581px;width:1px;height:1px;background:#808080"></div>
<div style="left:700px;top:580px;width:1px;height:1px;background:#808080"></div>
<div style="left:701px;top:579px;width:1px;height:1px;background:#808080"></div>
<div style="left:702px;top:578px;width:1px;height:1px;background:#808080"></div>
<div style="left:703px;top:577px;width:1px;height:1px;background:#808080"></div>
<div style="left:704px;top:576px;width:1px;height:1px;background:#808080"></div>
<div style="left:705px;top:575px;width:1px;height:1px;background:#808080"></div>
<div style="left:706px;top:574px;width:1px;height:1px;background:#808080"></div>
<div style="left:707px;top:573px;width:1px;height:1px;background:#808080"></div>
<div style="left:708px;top:572px;width:1px;height:1px;background:#808080"></div>
<div style="left:699px;top:582px;width:1px;height:1px;background:#808080"></div>
<div style="left:700px;top:581px;width:1px;height:1px;background:#808080"></div>
<div style="left:701px;top:580px;width:1px;height:1px;background:#808080"></div>
<div style="left:702px;top:579px;width:1px;height:1px;background:#808080"></div>
<div style="left:703px;top:578px;width:1px;height:1px;background:#808080"></div>
<div style="left:704px;top:577px;width:1px;height:1px;background:#808080"></div>
<div style="left:705px;top:576px;width:1px;height:1px;background:#808080"></div>
<div style="left:706px;top:575px;width:1px;height:1px;background:#808080"></div>
<div style="left:707px;top:574px;width:1px;height:1px;background:#808080"></div>
<div style="left:708px;top:573px;width:1px;height:1px;background:#808080"></div>
<div style="left:701px;top:582px;width:1px;height:1px;background:#ffffff"></div>
<div style="left:702px;top:581px;width:1px;height:1px;background:#ffffff"></div>
<div style="left:703px;top:580px;width:1px;height:1px;background:#ffffff"></div>
<div style="left:704px;top:579px;width:1px;height:1px;background:#ffffff"></div>
<div style="left:705px;top:578px;width:1px;height:1px;background:#ffffff"></div>
<div style="left:706px;top:577px;width:1px;height:1px;background:#ffffff"></div>
<div style="left:707px;top:576px;width:1px;height:1px;background:#ffffff"></div>
<div style="left:708px;top:575px;width:1px;height:1px;background:#ffffff"></div>
<div style="left:702px;top:582px;width:1px;height:1px;background:#808080"></div>
<div style="left:703px;top:581px;width:1px;height:1px;background:#808080"></div>
<div style="left:704px;top:580px;width:1px;height:1px;background:#808080"></div>
<div style="left:705px;top:579px;width:1px;height:1px;background:#808080"></div>
<div style="left:706px;top:578px;width:1px;height:1px;background:#808080"></div>
<div style="left:707px;top:577px;width:1px;height:1px;background:#808080"></div>
<div style="left:708px;top:576px;width:1px;height:1px;background:#808080"></div>
<div style="left:703px;top:582px;width:1px;height:1px;background:#808080"></div>
<div style="left:704px;top:581px;width:1px;height:1px;background:#808080"></div>
<div style="left:705px;top:580px;width:1px;height:1px;background:#808080"></div>
<div style="left:706px;top:579px;width:1px;height:1px;background:#808080"></div>
<div style="left:707px;top:578px;width:1px;height:1px;background:#808080"></div>
<div style="left:708px;top:577px;width:1px;height:1px;background:#808080"></div>
<div style="left:705px;top:582px;width:1px;height:1px;background:#ffffff"></div>
<div style="left:706px;top:581px;width:1px;height:1px;background:#ffffff"></div>
<div style="left:707px;top:580px;width:1px;height:1px;background:#ffffff"></div>
<div style="left:708px;top:579px;width:1px;height:1px;background:#ffffff"></div>
<div style="left:706px;top:582px;width:1px;height:1px;background:#808080"></div>
<div style="left:707px;top:581px;width:1px;height:1px;background:#808080"></div>
<div style="left:708px;top:580px;width:1px;height:1px;background:#808080"></div>
<div style="left:707px;top:582px;width:1px;height:1px;background:#808080"></div>
<div style="left:708px;top:581px;width:1px;height:1px;background:#808080"></div>
</body></html>
